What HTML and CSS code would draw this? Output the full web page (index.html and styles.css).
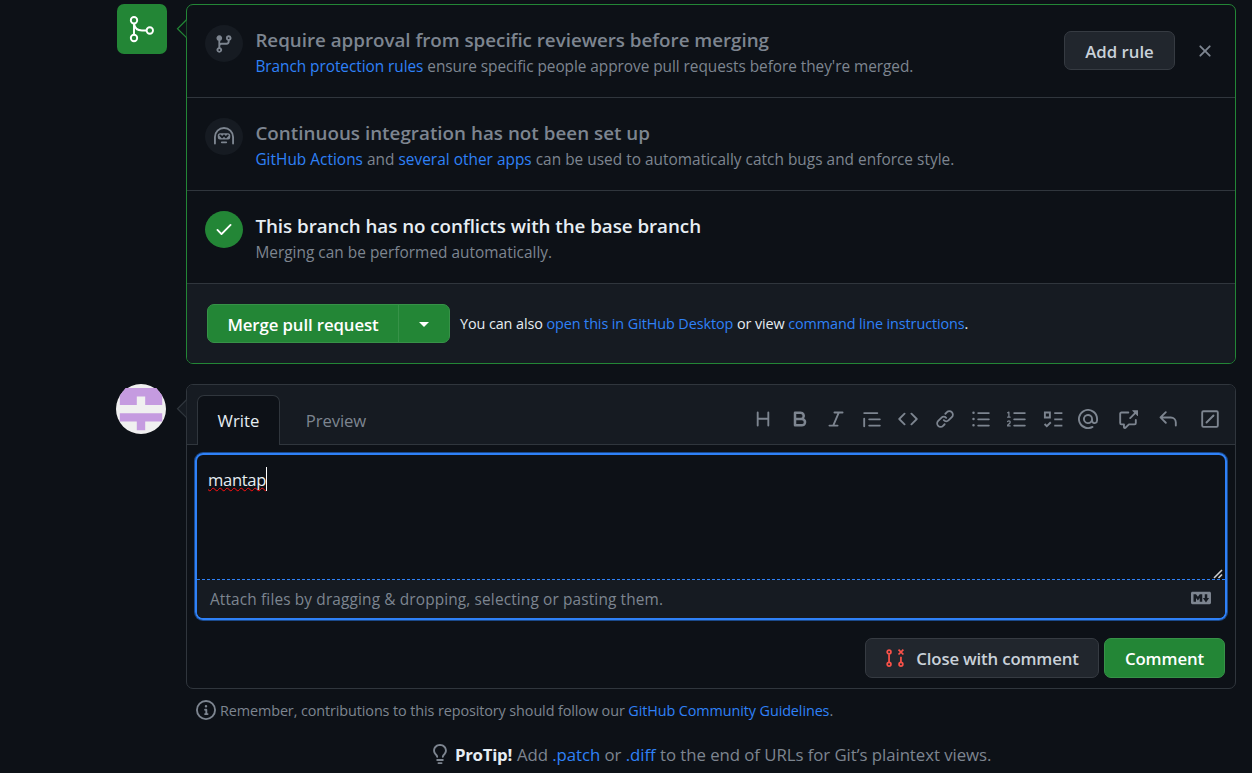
FILE: index.html
```html
<!DOCTYPE html>
<html lang="en">
<head>
<meta charset="utf-8">
<title>Pull request</title>
<link rel="stylesheet" href="styles.css">
</head>
<body>
<main class="page">
  <section class="timeline-row">
    <div class="merge-badge">
      <svg width="50" height="50" viewBox="0 0 50 50" fill="none" stroke="#fff" stroke-width="1.9"><circle cx="17" cy="16.2" r="3.2"/><circle cx="17" cy="34" r="3.2"/><circle cx="32.8" cy="26.5" r="3.2"/><path d="M17 19.5v11.3M17 19.5q1 7 8 7h4.6"/></svg>
    </div>
    <div class="panel panel-green">
      <svg class="caret" width="11" height="20" viewBox="0 0 11 20"><path class="caret-green" d="M10.5.8L1.500 9.700l9 9"/></svg>
      <div class="check-row">
        <span class="round"><svg class="ico" viewBox="0 0 16 16"><path d="M11.75 2.5a.75.75 0 100 1.5.75.75 0 000-1.5zm-2.25.75a2.25 2.25 0 113 2.122V6A2.5 2.5 0 0110 8.5H6a1 1 0 00-1 1v1.128a2.251 2.251 0 11-1.5 0V5.372a2.25 2.25 0 111.5 0v1.836A2.492 2.492 0 016 7h4a1 1 0 001-1v-.628A2.25 2.25 0 019.5 3.25zM4.25 12a.75.75 0 100 1.5.75.75 0 000-1.5zM3.5 3.25a.75.75 0 111.5 0 .75.75 0 01-1.5 0z"/></svg></span>
        <div class="check-text">
          <h3 class="title">Require approval from specific reviewers before merging</h3>
          <p class="sub sub-tight"><a>Branch protection rules</a> ensure specific people approve pull requests before they're merged.</p>
        </div>
        <button class="btn btn-rule">Add rule</button>
        <svg class="ico close" viewBox="0 0 16 16"><path d="M3.72 3.72a.75.75 0 011.06 0L8 6.94l3.22-3.22a.75.75 0 111.06 1.06L9.06 8l3.22 3.22a.75.75 0 11-1.06 1.06L8 9.06l-3.22 3.22a.75.75 0 01-1.06-1.06L6.94 8 3.72 4.78a.75.75 0 010-1.06z"/></svg>
      </div>
      <div class="check-row">
        <span class="round"><svg class="ico" viewBox="0 0 16 16"><path fill-rule="evenodd" d="M0 8a8 8 0 1116 0v5.25a.75.75 0 01-1.5 0V8a6.5 6.5 0 10-13 0v5.25a.75.75 0 01-1.5 0V8zm5.5 4.25a.75.75 0 01.75-.75h3.5a.75.75 0 010 1.5h-3.5a.75.75 0 01-.75-.75zM3 6.75C3 5.784 3.784 5 4.75 5h6.5c.966 0 1.75.784 1.75 1.75v1.5A1.75 1.75 0 0111.25 10h-6.5A1.75 1.75 0 013 8.25v-1.5zm1.47-.53a.75.75 0 011.06 0l.97.97.97-.97a.75.75 0 011.06 0l.97.97.97-.97a.75.75 0 111.06 1.06l-1.5 1.5a.75.75 0 01-1.06 0L8 7.81l-.97.97a.75.75 0 01-1.06 0l-1.5-1.5a.75.75 0 010-1.06z"/></svg></span>
        <div class="check-text">
          <h3 class="title title-ci">Continuous integration has not been set up</h3>
          <p class="sub"><a>GitHub Actions</a> and <a>several other apps</a> can be used to automatically catch bugs and enforce style.</p>
        </div>
      </div>
      <div class="check-row">
        <span class="round round-green"><svg class="ico" viewBox="0 0 16 16"><path d="M13.78 4.22a.75.75 0 010 1.06l-7.25 7.25a.75.75 0 01-1.06 0L2.22 9.28a.75.75 0 011.06-1.06L6 10.94l6.72-6.72a.75.75 0 011.06 0z"/></svg></span>
        <div class="check-text">
          <h3 class="title title-bright">This branch has no conflicts with the base branch</h3>
          <p class="sub">Merging can be performed automatically.</p>
        </div>
      </div>
      <div class="merge-row">
        <div class="split">
          <button class="split-main">Merge pull request</button>
          <button class="split-drop"><i class="triangle"></i></button>
        </div>
        <p class="hint">You can also <a>open this in GitHub Desktop</a> or view <a>command line instructions</a>.</p>
      </div>
    </div>
  </section>

  <section class="timeline-row">
    <svg class="avatar" width="50" height="50" viewBox="0 0 50 50"><circle cx="25" cy="25" r="25" fill="#f0f0f0"/><path fill="#c59be0" d="M3.8 15.5V11.500L9.500 4.100H40.500L46.200 11.500V20.900H29.200V12.500H20.800V20.900H3.800zM3.800 29.200H46.200V37.600H29.200V46.200H20.800V37.600H3.800z"/></svg>
    <div class="panel panel-grey">
      <svg class="caret" width="11" height="20" viewBox="0 0 11 20"><path class="caret-grey" d="M10.500.8L1.500 9.700l9 9"/></svg>
      <div class="tabs">
        <span class="tab tab-active">Write</span>
        <span class="tab">Preview</span>
        <div class="tools">
          <svg class="ico" viewBox="0 0 16 16"><path d="M3.750 2a.75.75 0 01.75.75V7h7V2.750a.75.75 0 011.500 0v10.500a.75.75 0 01-1.500 0V8.500h-7v4.750a.75.75 0 01-1.500 0V2.750A.75.75 0 013.750 2z"/></svg>
          <svg class="ico" viewBox="0 0 16 16"><path fill-rule="evenodd" d="M4 2a1 1 0 00-1 1v10a1 1 0 001 1h5.500a3.500 3.500 0 001.852-6.470A3.500 3.500 0 008.500 2H4zm4.500 5a1.500 1.500 0 100-3H5v3h3.500zM5 9v3h4.500a1.500 1.500 0 000-3H5z"/></svg>
          <svg class="ico" viewBox="0 0 16 16"><path d="M6 2.750A.75.75 0 016.750 2h6.500a.75.75 0 010 1.500h-2.505l-3.858 9H9.250a.75.75 0 010 1.500h-6.500a.75.75 0 010-1.500h2.505l3.858-9H6.750A.75.75 0 016 2.750z"/></svg>
          <svg class="ico" viewBox="0 0 16 16"><path d="M1.750 2.500a.75.75 0 000 1.500h10.500a.75.75 0 000-1.500H1.750zm4 5a.75.75 0 000 1.500h8.500a.75.75 0 000-1.500h-8.500zm0 5a.75.75 0 000 1.500h8.500a.75.75 0 000-1.500h-8.500zM2.500 7.750a.75.75 0 00-1.500 0v6a.75.75 0 001.500 0v-6z"/></svg>
          <svg class="ico" viewBox="0 0 16 16"><path d="M4.720 3.220a.75.75 0 011.060 1.060L2.060 8l3.720 3.720a.75.75 0 11-1.060 1.060L.470 8.530a.75.75 0 010-1.060l4.250-4.250zm6.560 0a.75.75 0 10-1.060 1.060L13.940 8l-3.720 3.720a.75.75 0 101.060 1.060l4.250-4.250a.75.75 0 000-1.060l-4.250-4.250z"/></svg>
          <svg class="ico" viewBox="0 0 16 16"><path d="M7.775 3.275a.75.75 0 001.060 1.060l1.250-1.250a2 2 0 112.830 2.830l-2.500 2.500a2 2 0 01-2.830 0 .75.75 0 00-1.060 1.060 3.500 3.500 0 004.950 0l2.500-2.500a3.500 3.500 0 00-4.950-4.950l-1.250 1.250zm-4.690 9.640a2 2 0 010-2.830l2.500-2.500a2 2 0 012.830 0 .75.75 0 001.060-1.060 3.500 3.500 0 00-4.950 0l-2.500 2.500a3.500 3.500 0 004.950 4.950l1.250-1.250a.75.75 0 00-1.060-1.060l-1.250 1.250a2 2 0 01-2.830 0z"/></svg>
          <svg class="ico" viewBox="0 0 16 16"><path d="M2 4a1 1 0 100-2 1 1 0 000 2zm3.750-1.500a.75.75 0 000 1.500h8.500a.75.75 0 000-1.500h-8.500zm0 5a.75.75 0 000 1.500h8.500a.75.75 0 000-1.500h-8.500zm0 5a.75.75 0 000 1.500h8.500a.75.75 0 000-1.500h-8.500zM3 8a1 1 0 11-2 0 1 1 0 012 0zm-1 6a1 1 0 100-2 1 1 0 000 2z"/></svg>
          <svg class="ico" viewBox="0 0 16 16"><path d="M2.003 2.500a.5.5 0 00-.723-.447l-1.003.5a.5.5 0 00.446.895l.28-.14V6H.5a.5.5 0 000 1h2.006a.5.5 0 100-1h-.503V2.500zM5 3.250a.75.75 0 01.75-.75h8.500a.75.75 0 010 1.500h-8.500A.75.75 0 015 3.250zm0 5a.75.75 0 01.75-.75h8.500a.75.75 0 010 1.500h-8.500A.75.75 0 015 8.250zm0 5a.75.75 0 01.75-.75h8.500a.75.75 0 010 1.500h-8.500a.75.75 0 01-.75-.75zM.924 10.320l.003-.004a.851.851 0 01.144-.153A.66.66 0 011.500 10c.195 0 .306.068.374.146a.57.57 0 01.128.376c0 .453-.269.682-.8 1.078l-.035.025C.692 11.980 0 12.495 0 13.500a.5.5 0 00.5.5h2.003a.5.5 0 000-1H1.146c.132-.197.351-.372.654-.597l.047-.035c.47-.35 1.156-.858 1.156-1.845 0-.365-.118-.744-.377-1.038-.268-.303-.658-.484-1.126-.484-.48 0-.84.202-1.068.392a1.858 1.858 0 00-.348.384l-.01.018a.5.5 0 00.851.525z"/></svg>
          <svg class="ico ico-line" viewBox="0 0 16 16"><path d="M1.500 2.750h4v4h-4zM9 3.250h6.500M9 8.250h6.500M9 13.250h6.500M1.250 12l1.800 1.800 3.200-3.200"/></svg>
          <svg class="ico mention" viewBox="0 0 16 16"><path fill-rule="evenodd" d="M4.750 2.370a6.500 6.500 0 006.500 11.260.75.75 0 01.75 1.298 8 8 0 113.994-7.273.754.754 0 01.006.095v1.500a2.750 2.750 0 01-5.072 1.475A4 4 0 1112 8v1.250a1.250 1.250 0 002.500 0V7.867a6.500 6.500 0 00-9.750-5.496V2.370zM10.500 8a2.500 2.500 0 10-5 0 2.500 2.500 0 005 0z"/></svg>
          <svg class="ico xref" viewBox="0 0 16 16"><path d="M16 1.250v4.146a.25.25 0 01-.427.177L14.030 4.030l-3.750 3.750a.75.75 0 11-1.060-1.060l3.750-3.750-1.543-1.543A.25.25 0 0111.604 1h4.146a.25.25 0 01.25.25zM2.750 3.500a.25.25 0 00-.25.25v7.500c0 .138.112.25.25.25h2a.75.75 0 01.75.75v2.190l2.720-2.720a.75.75 0 01.53-.22h4.500a.25.25 0 00.25-.25v-2.500a.75.75 0 111.500 0v2.500A1.750 1.750 0 0113.250 13H9.060l-2.573 2.573A1.457 1.457 0 014 14.543V13H2.750A1.750 1.750 0 011 11.250v-7.500C1 2.784 1.784 2 2.750 2h5.500a.75.75 0 010 1.500h-5.500z"/></svg>
          <svg class="ico reply" viewBox="0 0 16 16"><path d="M6.780 1.970a.75.75 0 010 1.060L3.810 6h6.440A4.750 4.750 0 0115 10.750v2.500a.75.75 0 01-1.500 0v-2.500a3.250 3.250 0 00-3.250-3.250H3.810l2.970 2.970a.75.75 0 11-1.060 1.060L1.470 7.280a.75.75 0 010-1.060l4.250-4.250a.75.75 0 011.060 0z"/></svg>
          <svg class="ico ico-line slash" viewBox="0 0 16 16"><rect x="1.750" y="1.750" width="12.500" height="12.500" rx="1"/><path stroke-linecap="round" d="M5.200 10.800l5.600-5.600"/></svg>
        </div>
      </div>
      <div class="editor">
        <div class="field"><span class="typed">mantap</span><svg class="grip" width="10" height="10" viewBox="0 0 10 10"><path stroke="#d0d0d0" stroke-width="1.600" d="M1 9L9 1M5.500 9L9 5.500"/></svg></div>
        <div class="attach"><span>Attach files by dragging &amp; dropping, selecting or pasting them.</span>
          <svg class="ico md" viewBox="0 0 16 16"><path fill-rule="evenodd" d="M14.850 3H1.150C.520 3 0 3.520 0 4.150v7.690C0 12.480.520 13 1.150 13h13.690c.64 0 1.150-.52 1.150-1.150v-7.700C16 3.520 15.480 3 14.850 3zM9 11H7V8L5.500 9.920 4 8v3H2V5h2l1.500 2L7 5h2v6zm2.990.5L9.500 8H11V5h2v3h1.500l-2.510 3.500z"/></svg>
        </div>
      </div>
      <div class="actions">
        <button class="btn btn-close"><svg class="ico ico-line closed" viewBox="0 0 16 16"><circle cx="3.250" cy="3.250" r="1.500"/><circle cx="3.250" cy="13" r="1.500"/><circle cx="12.750" cy="13" r="1.500"/><path d="M3.250 5v6.300M12.750 7v4.300M10.800 1.300l3.900 3.900M14.700 1.300L10.800 5.200"/></svg><span>Close with comment</span></button>
        <button class="btn btn-green">Comment</button>
      </div>
    </div>
  </section>

  <p class="note"><svg class="ico" viewBox="0 0 16 16"><path fill-rule="evenodd" d="M8 1.500a6.500 6.500 0 100 13 6.500 6.500 0 000-13zM0 8a8 8 0 1116 0A8 8 0 010 8zm6.500-.25A.75.75 0 017.250 7h1a.75.75 0 01.75.75v2.750h.25a.75.75 0 010 1.500h-2a.75.75 0 010-1.500h.25v-2h-.25a.75.75 0 01-.75-.75zM8 6a1 1 0 100-2 1 1 0 000 2z"/></svg><span>Remember, contributions to this repository should follow our <a>GitHub Community Guidelines</a>.</span></p>
  <p class="tip"><svg class="ico" viewBox="0 0 16 16"><path d="M8 1.500c-2.363 0-4 1.690-4 3.750 0 .984.424 1.625.984 2.304l.214.253c.223.264.47.556.673.848.284.411.537.896.621 1.490a.75.75 0 01-1.484.211c-.04-.282-.163-.547-.37-.847a8.695 8.695 0 00-.542-.68c-.084-.1-.173-.205-.268-.32C3.201 7.750 2.500 6.766 2.500 5.250 2.500 2.310 4.863 0 8 0s5.500 2.310 5.500 5.250c0 1.516-.701 2.500-1.328 3.259-.095.115-.184.22-.268.319-.207.245-.383.453-.541.681-.208.3-.33.565-.37.847a.75.75 0 01-1.485-.212c.084-.593.337-1.078.621-1.489.203-.292.45-.584.673-.848.075-.088.147-.173.213-.253.561-.679.985-1.320.985-2.304 0-2.060-1.637-3.750-4-3.750zM6 15.250a.75.75 0 01.75-.75h2.500a.75.75 0 010 1.500h-2.500a.75.75 0 01-.75-.75zM5.750 12a.75.75 0 000 1.500h4.500a.75.75 0 000-1.500h-4.500z"/></svg><strong>ProTip!</strong><span>Add <a>.patch</a> or <a>.diff</a> to the end of URLs for Git’s plaintext views.</span></p>
</main>
</body>
</html>
```
FILE: styles.css
```css
* { box-sizing: border-box; }
body { margin: 0; height: 773px; overflow: hidden; background: #0d1117; color: #e6edf3; font-family: "Open Sans", "Noto Sans", sans-serif; }
h3, p { margin: 0; white-space: nowrap; }
button { margin: 0; padding: 0; font-family: inherit; white-space: nowrap; }
a { color: #2f81f7; }
.page { display: flex; flex-direction: column; padding: 4px 16px 0 116px; }
.timeline-row { display: flex; justify-content: space-between; align-items: flex-start; margin-bottom: 20px; }
.merge-badge { width: 50px; height: 50px; margin-left: 1px; border-radius: 7px; background: #238636; }
.avatar { display: block; }
.panel { position: relative; width: 1050px; border: 1px solid #30363d; border-radius: 7px; }
.panel-green { height: 360px; border-color: #238636; }
.panel-grey { height: 305px; }
.caret { position: absolute; left: -11px; top: 14px; }
.caret-green { fill: #0d1117; stroke: #238636; stroke-width: 1.2; }
.caret-grey { fill: #161b22; stroke: #30363d; stroke-width: 1.2; }
.ico { display: block; flex: none; width: 20px; height: 20px; fill: #7d8590; }
.ico-line { fill: none; stroke: #7d8590; stroke-width: 1.5; }

.check-row { display: flex; align-items: flex-start; height: 93px; padding: 20px 20px 0 18px; border-bottom: 1px solid #30363d; }
.round { display: flex; align-items: center; justify-content: center; width: 38px; height: 37px; border-radius: 50%; background: #161b22; }
.round-green { padding-bottom: 1px; background: #238636; }
.round-green .ico { fill: #fff; }
.check-text { flex: 1; padding-left: 12.4px; }
.title { height: 30px; line-height: 30px; font-size: 18.8px; font-weight: 600; letter-spacing: -0.02px; color: #7d8590; }
.title-ci { letter-spacing: 0.025px; }
.title-bright { letter-spacing: -0.04px; color: #e6edf3; }
.sub { height: 24px; line-height: 24px; font-size: 15.4px; letter-spacing: 0.02px; color: #7d8590; }
.sub-tight { letter-spacing: -0.05px; }
.btn { display: flex; align-items: center; justify-content: center; height: 40px; border: 1px solid #363b42; border-radius: 7px; background: #21262d; color: #c9d1d9; font-size: 16.8px; font-weight: 600; }
.btn-rule { width: 111px; height: 39px; margin-top: 6px; padding-top: 1px; }
.close { margin: 16px 0 0 20px; }
.merge-row { display: flex; align-items: flex-start; height: 79px; padding: 20px; background: #161b22; border-radius: 0 0 6px 6px; }
.split { display: flex; width: 243px; height: 39px; border: 1px solid #379248; border-radius: 7px; background: #238636; }
.split-main { width: 191px; padding: 1px 0 0; border: 0; border-right: 1px solid #379248; background: none; color: #fff; font-size: 16.8px; font-weight: 600; letter-spacing: -0.1px; }
.split-drop { display: flex; flex: 1; align-items: center; justify-content: center; padding-top: 1px; border: 0; background: none; }
.triangle { border: 5px solid transparent; border-top-color: #fff; border-bottom: 0; }
.hint { padding-left: 10px; line-height: 39px; font-size: 14.4px; letter-spacing: -0.09px; }

.tabs { display: flex; align-items: flex-end; height: 60px; padding: 0 15px 0 10px; border-bottom: 1px solid #30363d; border-radius: 6px 6px 0 0; background: #161b22; }
.tab { display: flex; align-items: center; justify-content: center; width: 83px; height: 50px; margin-bottom: -1px; border: 1px solid transparent; border-bottom: 0; color: #7d8590; font-size: 16.7px; }
.tab + .tab { width: 112px; letter-spacing: -0.1px; }
.tab-active { border-color: #30363d; border-radius: 7px 7px 0 0; background: #0d1117; color: #e6edf3; }
.tools { display: flex; flex: 1; justify-content: flex-end; gap: 16.25px; margin-bottom: 15px; }
.mention { margin-left: -1.5px; }
.xref { margin-left: 3.75px; }
.reply { margin-left: 3.75px; }
.slash { margin-left: 5.75px; }
.editor { display: flex; flex-direction: column; width: 1032px; height: 167px; margin: 8px 0 0 8px; border: 2px solid #2f81f7; border-radius: 8px; box-shadow: 0 0 0 1px #1b4a8c; }
.field { position: relative; height: 125px; border-bottom: 1px dashed #2f81f7; padding: 12px 11px; }
.typed { display: inline-block; height: 24px; border-right: 1px solid #fff; line-height: 25px; font-size: 16.6px; letter-spacing: -0.35px; text-decoration: underline wavy #ff1010 1px; text-decoration-skip-ink: none; text-underline-offset: 1px; }
.grip { position: absolute; right: 2px; bottom: 0; }
.attach { display: flex; flex: 1; align-items: center; justify-content: space-between; padding: 1px 14px 0 13px; border-radius: 0 0 6px 6px; background: #161b22; color: #7d8590; font-size: 15.4px; letter-spacing: 0.14px; }
.md { margin-bottom: 4px; }
.actions { display: flex; justify-content: flex-end; gap: 5px; padding: 18px 10px 0 0; }
.btn-close { width: 234px; gap: 11px; letter-spacing: -0.17px; }
.closed { stroke: #f85149; stroke-width: 1.4; }
.btn-green { width: 121px; border-color: #379248; background: #238636; color: #fff; letter-spacing: -0.1px; }
.note { display: flex; align-items: center; gap: 4px; height: 22px; margin: -10px 0 0 80px; color: #7d8590; font-size: 14.4px; letter-spacing: -0.1px; }
.tip { display: flex; align-items: center; gap: 5px; height: 28px; margin: 19px 0 0 314px; color: #7d8590; font-size: 16.8px; letter-spacing: -0.05px; }
.tip strong { color: #e6edf3; font-weight: 700; letter-spacing: -0.27px; }
```
